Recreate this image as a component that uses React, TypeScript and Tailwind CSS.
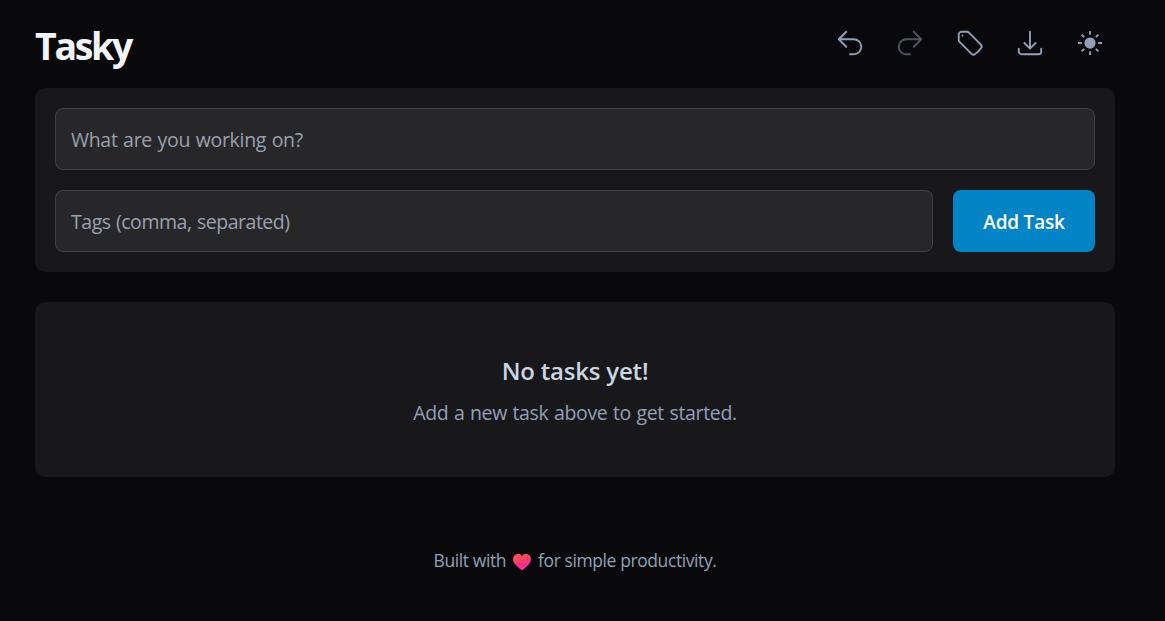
import type { ReactNode } from "react";

const outline = {
  undo: "M9 15 3 9m0 0 6-6M3 9h12a6 6 0 0 1 0 12h-3",
  redo: "m15 15 6-6m0 0-6-6m6 6H9a6 6 0 0 0 0 12h3",
  download:
    "M3 16.5v2.25A2.25 2.25 0 0 0 5.25 21h13.5A2.25 2.25 0 0 0 21 18.75V16.5M16.5 12 12 16.5m0 0L7.5 12m4.5 4.5V3",
  tag: "M9.568 3H5.25A2.25 2.25 0 0 0 3 5.25v4.318c0 .597.237 1.17.659 1.591l9.581 9.581c.699.699 1.78.872 2.607.33a18.095 18.095 0 0 0 5.223-5.223c.542-.827.369-1.908-.33-2.607L11.16 3.66A2.25 2.25 0 0 0 9.568 3Z",
  rays: "M12 2.4v3M12 18.6v3M2.4 12h3M18.600 12h3M5.300 5.300l2.050 2.050M16.650 16.650l2.050 2.050M18.700 5.300l-2.050 2.050M7.350 16.650l-2.050 2.050",
};

function IconButton({ label, disabled, children }: { label: string; disabled?: boolean; children: ReactNode }) {
  return (
    <button aria-label={label} disabled={disabled} className="p-2.5 text-slate-400 disabled:opacity-50">
      <svg
        viewBox="0 0 24 24"
        fill="none"
        stroke="currentColor"
        strokeWidth={1.5}
        strokeLinecap="round"
        strokeLinejoin="round"
        className="size-[30px]"
      >
        {children}
      </svg>
    </button>
  );
}

function Heart() {
  return (
    <svg viewBox="0 0 18 16" role="img" aria-label="love" className="mx-[7px] inline-block h-4 w-[18px] align-[-3px]">
      <defs>
        <linearGradient id="heart" x1="0.3" y1="0" x2="0.6" y2="1">
          <stop offset="0" stopColor="#fc5550" />
          <stop offset="0.4" stopColor="#fb4263" />
          <stop offset="0.65" stopColor="#f52f83" />
          <stop offset="1" stopColor="#fb35b0" />
        </linearGradient>
      </defs>
      <path
        fill="url(#heart)"
        d="M9 2.2C7.7.2 6.4.1 5 .1 2.2.1.1 2.3.1 5.2c0 2.400 1.200 4.300 3 6.100l4.400 4c.9.800 2.100.800 3 0l4.400-4c1.800-1.800 3-3.700 3-6.100C17.900 2.300 15.800.1 13 .1 11.600.1 10.300.2 9 2.200Z"
      />
    </svg>
  );
}

const field =
  "h-[62px] min-w-0 rounded-lg border border-zinc-700 bg-zinc-800 px-[15px] text-[19.5px] text-slate-200 outline-none placeholder:text-gray-400";

export default function App() {
  return (
    <div className="min-h-screen bg-zinc-950 pr-[50px] pl-[35px] font-['Open_Sans','Noto_Sans',sans-serif]">
      <header className="flex h-[88px] items-start justify-between">
        <h1 className="pt-[17px] text-[37.5px] leading-[57px] font-bold tracking-[-2.3px] text-slate-100">Tasky</h1>
        <div className="flex gap-2.5 pt-[18px]">
          <IconButton label="Undo">
            <path d={outline.undo} />
          </IconButton>
          <IconButton label="Redo" disabled>
            <path d={outline.redo} />
          </IconButton>
          <IconButton label="Tags">
            <path d={outline.tag} />
            <path d="M6 6h.008v.008H6V6Z" />
          </IconButton>
          <IconButton label="Export">
            <path d={outline.download} />
          </IconButton>
          <IconButton label="Toggle theme">
            <path d={outline.rays} strokeLinecap="butt" />
            <circle cx="12" cy="12" r="3.75" fill="currentColor" />
          </IconButton>
        </div>
      </header>

      <form className="flex flex-col gap-5 rounded-[10px] bg-zinc-900 p-5">
        <input
          className={`${field} tracking-[-0.3px] [word-spacing:0.8px]`}
          placeholder="What are you working on?"
        />
        <div className="flex gap-5">
          <input
            className={`${field} flex-1 tracking-[-0.47px] [word-spacing:0.8px]`}
            placeholder="Tags (comma, separated)"
          />
          <button
            type="button"
            className="h-[62px] w-[142px] rounded-lg bg-[#0284c7] pt-0.5 text-[19px] font-semibold tracking-[-0.2px] text-white"
          >
            Add Task
          </button>
        </div>
      </form>

      <section className="mt-[30px] flex h-[175px] flex-col items-center rounded-[10px] bg-zinc-900 pt-[50px]">
        <h2 className="text-2xl leading-[38px] font-semibold tracking-[-0.2px] text-slate-300">No tasks yet!</h2>
        <p className="mt-2 text-[19.5px] leading-[30px] tracking-[-0.34px] [word-spacing:0.8px] text-slate-400">
          Add a new task above to get started.
        </p>
      </section>

      <footer className="mt-[70px] text-center text-[17.5px] leading-[26px] tracking-[-0.41px] text-slate-400">
        Built with
        <Heart />
        for simple productivity.
      </footer>
    </div>
  );
}
